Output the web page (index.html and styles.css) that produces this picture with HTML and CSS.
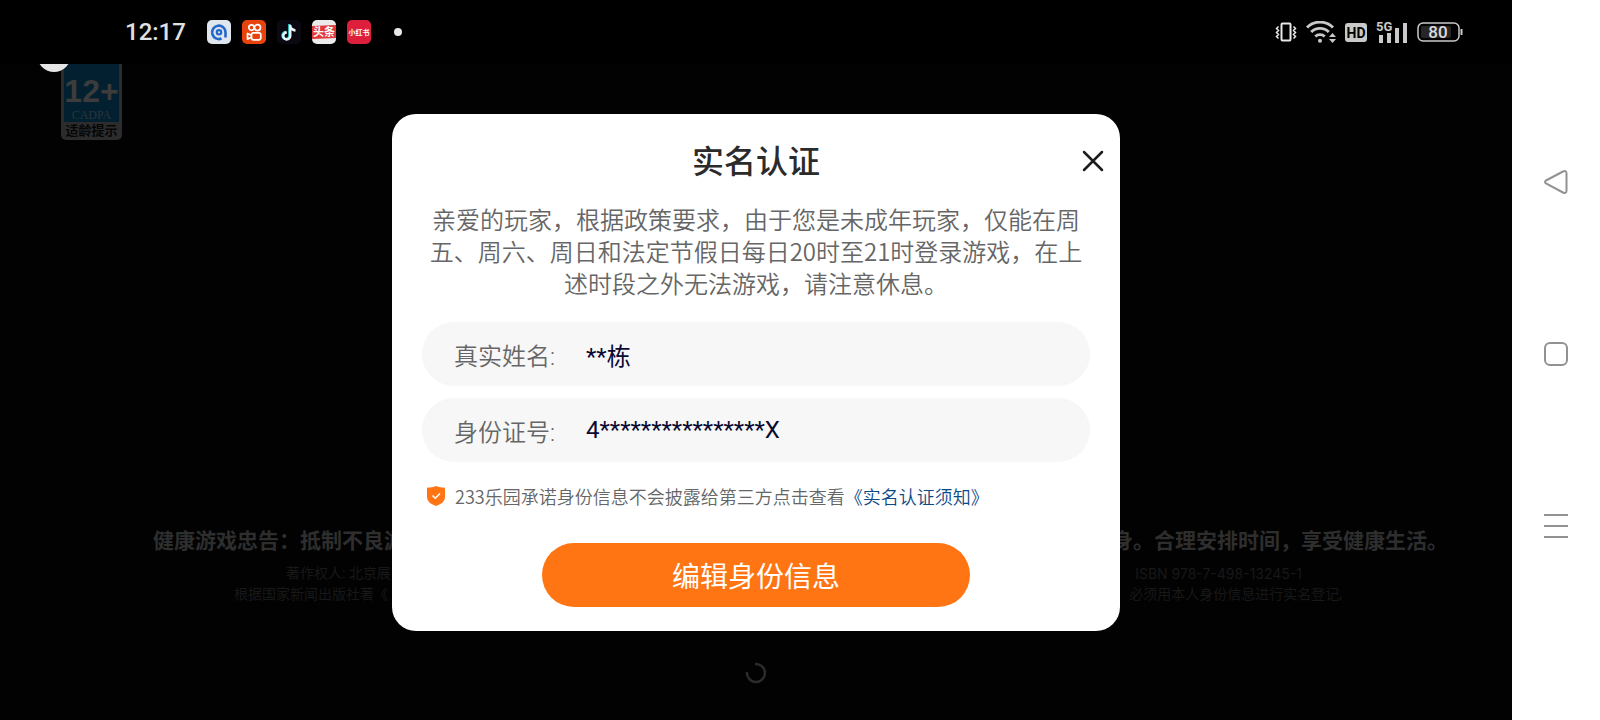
FILE: index.html
```
<!DOCTYPE html>
<html lang="zh-CN">

<head>
	<meta charset="utf-8">
	<meta name="viewport" content="width=device-width, initial-scale=1.0">
	<title>实名认证</title>
	<link rel="stylesheet" href="styles.css">
</head>

<body>
	<main class="screen">
		<header class="statusbar">
			<span class="time">12:17</span>
			<div class="apps">
				<svg class="app" viewBox="0 0 24 24">
					<rect width="24" height="24" rx="5" fill="#dfe6ee" />
					<path d="M14.500 18.500A6.700 6.700 0 1 1 18.500 12.300v5.200" fill="none" stroke="#2468c8" stroke-width="2.600" />
					<circle cx="12" cy="12.300" r="2.200" fill="none" stroke="#2468c8" stroke-width="2.200" />
				</svg>
				<svg class="app" viewBox="0 0 24 24">
					<rect width="24" height="24" rx="5" fill="#e8430c" />
					<g fill="none" stroke="#fff" stroke-width="1.7">
						<circle cx="9.5" cy="7.6" r="2.7" />
						<circle cx="15.5" cy="7.6" r="3" />
						<rect x="9.5" y="12.8" width="9.3" height="7" rx="2" />
						<path d="M9.500 15.300l-4-1.800v5.600l4-1.800" stroke-linejoin="round" />
					</g>
				</svg>
				<svg class="app" viewBox="0 0 24 24">
					<rect width="24" height="24" rx="5" fill="#0b0812" />
					<path d="M12.400 4v11.500a3.500 3.500 0 1 1-3.500-3.500M12.400 5c.6 3 2.500 4.500 5.200 4.700" fill="none" stroke="#35d6dc" stroke-width="2.400" />
					<path d="M13.300 5v11a3.500 3.500 0 1 1-3.500-3.500M13.300 6c.6 3 2.500 4.300 5.200 4.500" fill="none" stroke="#f4f4f6" stroke-width="2.300" />
				</svg>
				<svg class="app" viewBox="0 0 24 24">
					<rect width="24" height="24" rx="5" fill="#eceaea" />
					<path d="M0 6l24-1v13L0 19z" fill="#e0383c" />
					<text x="12" y="16" text-anchor="middle" font-size="11" font-weight="700" fill="#fff">头条</text>
				</svg>
				<svg class="app" viewBox="0 0 24 24">
					<rect width="24" height="24" rx="5" fill="#dd1f3c" />
					<text x="12" y="15" text-anchor="middle" font-size="7" font-weight="700" fill="#fff">小红书</text>
				</svg>
			</div>
			<span class="dot"></span>

			<div class="signals">
				<svg width="22" height="20" viewBox="0 0 22 20" fill="none" stroke="#e8e8e8">
					<rect x="6.500" y="1.500" width="9" height="17" rx="1" stroke-width="2" />
					<path d="M3.500 4.500L1.500 6.500l2 2-2 2 2 2-2 2 2 2M18.500 4.500l2 2-2 2 2 2-2 2 2 2-2 2" stroke-width="1.500" />
				</svg>
				<svg width="30" height="22" viewBox="0 0 30 22">
					<g fill="none" stroke="#c9c9c9" stroke-width="2.900">
						<path d="M1 6.500a18.500 18.500 0 0 1 26 0" />
						<path d="M5.200 11a12.500 12.500 0 0 1 17.600 0" />
						<path d="M9.300 15.500a6.800 6.800 0 0 1 9.400 0" />
					</g>
					<circle cx="14" cy="19.800" r="2" fill="#c9c9c9" />
					<path d="M26.500 12l3.500 4h-7zM26.500 22l3.500-4h-7z" fill="#c9c9c9" />
				</svg>
				<svg width="22" height="20" viewBox="0 0 22 20">
					<rect y="1" width="22" height="19" rx="3" fill="#c9c9c9" />
					<text class="tag" x="11" y="16" text-anchor="middle" font-size="14" fill="#000">HD</text>
				</svg>
				<svg width="32" height="24" viewBox="0 0 32 24" fill="#c9c9c9">
					<path d="M3 15h4v8H3zM11 13h4v10h-4zM19 8h4v15h-4zM27 3h4v20h-4z" />
					<text class="tag" x="0" y="11" font-size="13">5G</text>
				</svg>
				<svg width="46" height="20" viewBox="0 0 46 20">
					<rect x="1" y="1" width="41" height="18" rx="5" fill="none" stroke="#c9c9c9" stroke-width="1.500" />
					<rect x="4" y="4" width="30" height="12" rx="2" fill="#262626" />
					<path d="M44.500 7v6" stroke="#c9c9c9" stroke-width="2" />
					<text class="level" x="21" y="16" text-anchor="middle" font-size="17" fill="#dcdcdc">80</text>
				</svg>
			</div>
		</header>

		<section class="game">
			<div class="ball"></div>
			<div class="rating">
				<div class="rating-age">12+<small>CADPA</small></div>
				<div class="rating-tip">适龄提示</div>
			</div>

			<div class="notice">
				<p class="advice"><span>健康游戏忠告：抵制不良游</span><span>身。合理安排时间，享受健康生活。</span></p>
				<p class="owner"><span>著作权人: 北京展</span><span class="isbn">ISBN 978-7-498-13245-1</span></p>
				<p class="permit"><span>根据国家新闻出版社著《</span><span>必须用本人身份信息进行实名登记,</span></p>
			</div>

			<svg class="loading" viewBox="0 0 22 22">
				<path d="M10 2a9 9 0 1 1-8 8" fill="none" stroke="#2b2b2b" stroke-width="2.500" />
			</svg>
		</section>

		<div class="overlay">
			<form class="dialog" role="dialog" aria-labelledby="titel">
				<button class="close" type="button" aria-label="关闭">
					<svg width="22" height="22" viewBox="0 0 22 22">
						<path d="M2 2l18 18M20 2L2 20" stroke="#1d1d1d" stroke-width="2.500" stroke-linecap="round" />
					</svg>
				</button>
				<h1 id="titel">实名认证</h1>
				<p class="intro">亲爱的玩家，根据政策要求，由于您是未成年玩家，仅能在周五、周六、周日和法定节假日每日20时至21时登录游戏，在上述时段之外无法游戏，请注意休息。</p>

				<div class="field">
					<label for="navn">真实姓名:</label>
					<input type="text" id="navn" value="**栋">
				</div>
				<div class="field">
					<label for="id_nummer">身份证号:</label>
					<input type="text" id="id_nummer" value="4****************X">
				</div>

				<p class="promise">
					<svg width="18" height="20" viewBox="0 0 18 20">
						<path d="M9 0c2.500 1 5.500 1.500 8 1.600q1 .1 1 1.200v8.200c0 4.500-4.500 7.500-9 9-4.500-1.500-9-4.500-9-9V2.800q0-1.100 1-1.200C3.500 1.500 6.500 1 9 0z" fill="#ff7413" />
						<path d="M5.500 9.500l2.700 2.700L13 7.500" fill="none" stroke="#fff" stroke-width="1.600" />
					</svg>
					<span>233乐园承诺身份信息不会披露给第三方点击查看<a href="#">《实名认证须知》</a></span>
				</p>

				<button class="edit" type="button">编辑身份信息</button>
			</form>
		</div>
	</main>

	<nav class="navbar">
		<button type="button" aria-label="返回">
			<svg viewBox="0 0 24 24"><path d="M2 10.500L19 1.500q3.500-1.500 3.500 2v17q0 3.500-3.500 2L2 13.500q-2-1.500 0-3z" /></svg>
		</button>
		<button type="button" aria-label="主页">
			<svg viewBox="0 0 24 24"><rect x="1" y="1" width="22" height="22" rx="5" /></svg>
		</button>
		<button type="button" aria-label="菜单">
			<svg viewBox="0 0 24 24"><path d="M0 1h24M0 12h24M0 23h24" /></svg>
		</button>
	</nav>
</body>

</html>
```

FILE: styles.css
```
* {
	box-sizing: border-box;
}

body {
	margin: 0;
	min-height: 100vh;
	display: grid;
	grid-template-columns: 1fr 88px;
	background: #fff;
	font-family: Roboto, "Noto Sans CJK SC", sans-serif;
}

h1,
p {
	margin: 0;
}

button {
	border: none;
	padding: 0;
	background: none;
	font-family: inherit;
	cursor: pointer;
}

svg {
	display: block;
	flex: none;
}

.screen {
	position: relative;
	display: flex;
	flex-direction: column;
	background: #020202;
	overflow: hidden;
}

/*		Statuslinje		*/

.statusbar {
	position: relative;
	z-index: 1;
	height: 64px;
	padding: 0 49px 0 125px;
	display: flex;
	align-items: center;
	background: #000;
}

.time {
	color: #e0e0e0;
	font-size: 24px;
	font-weight: 500;
}

.apps {
	display: flex;
	gap: 11px;
	margin-left: 21px;
}

.app {
	width: 24px;
	height: 24px;
}

.dot {
	width: 8px;
	height: 8px;
	margin-left: 23px;
	border-radius: 50%;
	background: #e8e8e8;
}

.signals {
	display: flex;
	align-items: center;
	gap: 9px;
	margin-left: auto;
}

.tag {
	font-weight: 700;
}

.level {
	font-weight: 500;
}

/*		Spillet bag dialogen		*/

.game {
	flex: 1;
	display: flex;
	flex-direction: column;
	padding-bottom: 36px;
}

.ball {
	position: absolute;
	top: 38px;
	left: 37px;
	width: 34px;
	height: 34px;
	border-radius: 50%;
	background: #e4e4e4;
}

.rating {
	width: 61px;
	margin-left: 61px;
	padding: 0 3px;
	border-radius: 0 0 5px 5px;
	background: #2c2c2c;
	text-align: center;
}

.rating-age {
	height: 58px;
	padding-top: 10px;
	background: #02202f;
	color: #3c3c3c;
	font: 700 32px/34px "Liberation Sans", sans-serif;
}

.rating-age small {
	display: block;
	color: #2c363c;
	font: 12px/14px "Liberation Serif", serif;
}

.rating-tip {
	margin: 0 -3px;
	color: #060606;
	font-size: 13px;
	font-weight: 700;
	line-height: 18px;
}

.notice {
	margin-top: auto;
	white-space: nowrap;
}

.notice p {
	display: flex;
	justify-content: space-between;
	color: #181818;
	font-size: 14px;
	line-height: 21px;
}

.notice .advice {
	padding: 0 64px 0 153px;
	margin-bottom: 6px;
	color: #2e2e2e;
	font-size: 21px;
	font-weight: 700;
	line-height: 32px;
}

.notice .owner {
	padding: 0 210px 0 286px;
}

.notice .isbn {
	font-family: Inter, sans-serif;
}

.notice .permit {
	padding: 0 170px 0 234px;
}

.loading {
	width: 22px;
	height: 22px;
	margin: 57px auto 0;
}

/*		Dialog		*/

.overlay {
	position: absolute;
	inset: 0;
	display: flex;
	align-items: center;
	justify-content: center;
	padding-top: 25px;
}

.dialog {
	position: relative;
	width: 728px;
	padding: 24px 30px;
	border-radius: 24px;
	background: #fff;
}

.close {
	position: absolute;
	top: 36px;
	right: 16px;
}

.dialog h1 {
	color: #2b2b2b;
	font-size: 32px;
	font-weight: 500;
	line-height: 48px;
	text-align: center;
}

.intro {
	margin: 17px 0 23px;
	color: #666;
	font-family: "Noto Sans CJK SC", sans-serif;
	font-size: 24px;
	font-weight: 350;
	line-height: 32px;
	text-align: center;
}

.field {
	display: flex;
	align-items: center;
	height: 64px;
	margin-bottom: 12px;
	padding: 0 32px;
	border-radius: 32px;
	background: #f7f7f7;
}

.field label {
	width: 132px;
	color: #666;
	font-size: 24px;
	font-weight: 350;
}

.field input {
	flex: 1;
	min-width: 0;
	padding: 0;
	border: none;
	outline: none;
	background: none;
	color: #0a0a32;
	font-family: inherit;
	font-size: 24px;
}

.promise {
	display: flex;
	align-items: center;
	gap: 10px;
	margin-top: 20px;
	padding-left: 5px;
	color: #666;
	font-family: "Noto Sans CJK SC", sans-serif;
	font-size: 18px;
	font-weight: 350;
	line-height: 28px;
}

.promise a {
	color: #0b4a86;
	text-decoration: none;
}

.edit {
	display: block;
	width: 428px;
	height: 64px;
	margin: 33px auto 0;
	border-radius: 32px;
	background: #ff7413;
	color: #fff;
	font-size: 28px;
}

/*		Navigation i højre side		*/

.navbar {
	display: flex;
	flex-direction: column;
	align-items: center;
	justify-content: center;
	gap: 148px;
	padding-bottom: 12px;
}

.navbar svg {
	width: 24px;
	height: 24px;
	fill: none;
	stroke: #929292;
	stroke-width: 2;
}
```
